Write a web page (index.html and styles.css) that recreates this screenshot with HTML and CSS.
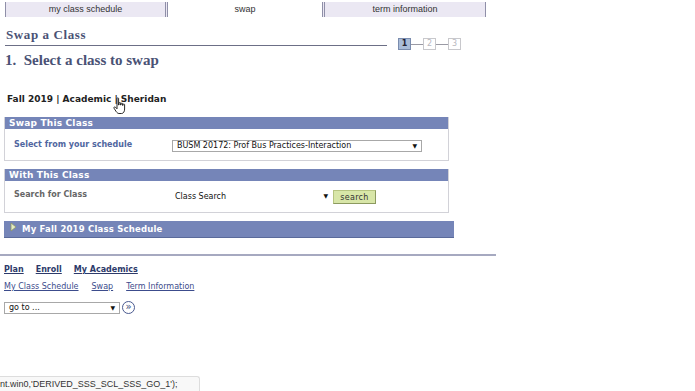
FILE: index.html
```html
<!DOCTYPE html>
<html lang="en">

<head>
    <meta charset="UTF-8">
    <title>Swap a Class</title>
    <link rel="stylesheet" href="styles.css">
</head>

<body>
    <!-- tabs -->
    <div class="tabs">
        <div class="tab tab-1">my class schedule</div>
        <div class="tab tab-on">swap</div>
        <div class="tab tab-3">term information</div>
    </div>

    <div class="title-row">
        <h1 class="title">Swap a Class</h1>
        <div class="steps">
            <span class="step step-on">1</span>
            <span class="step-line"></span>
            <span class="step">2</span>
            <span class="step-line"></span>
            <span class="step">3</span>
        </div>
    </div>

    <h2 class="subtitle">1.&nbsp; Select a class to swap</h2>

    <p class="term">Fall 2019 | Academic | Sheridan</p>

    <div class="panel panel-first">
        <div class="panel-head">Swap This Class</div>
        <div class="panel-body body-mid">
            <span class="label label-blue">Select from your schedule</span>
            <div class="select select-wide">
                <span>BUSM 20172: Prof Bus Practices-Interaction</span>
                <span class="arrow">&#9660;</span>
            </div>
        </div>
    </div>

    <div class="panel">
        <div class="panel-head">With This Class</div>
        <div class="panel-body body-high">
            <span class="label label-gray">Search for Class</span>
            <div class="plain-select">
                <span>Class Search</span>
                <span class="arrow">&#9660;</span>
            </div>
            <button class="search-btn">search</button>
        </div>
    </div>

    <div class="collapse">
        <svg class="tri" width="7" height="10" viewBox="0 0 7 10">
            <path d="M1 1 L6 5 L1 9 Z" fill="#e4ecc4" stroke="#8e9866" stroke-width="0.8" />
        </svg>
        My Fall 2019 Class Schedule
    </div>

    <div class="rule"></div>

    <div class="links-main">
        <a href="#">Plan</a>
        <a href="#">Enroll</a>
        <a href="#">My Academics</a>
    </div>
    <div class="links-sub">
        <a href="#">My Class Schedule</a>
        <a href="#">Swap</a>
        <a href="#">Term Information</a>
    </div>

    <div class="goto">
        <div class="select goto-select">
            <span>go to ...</span>
            <span class="arrow">&#9660;</span>
        </div>
        <span class="go-btn">&raquo;</span>
    </div>

    <!-- cursor over the term line -->
    <svg class="cursor" width="14" height="18" viewBox="0 0 14 18">
        <path d="M4 1.5 C4 0.6 5.6 0.6 5.6 1.5 L5.6 8 L6 8 L6 6.2 C6 5.3 7.6 5.3 7.6 6.2 L7.6 8 L8 8 L8 6.8 C8 5.9 9.6 5.9 9.6 6.8 L9.6 8.4 L10 8.4 L10 7.6 C10 6.8 11.6 6.8 11.6 7.6 L11.6 12 C11.6 14.5 10.5 16.5 8.5 16.5 L6 16.5 C4.8 16.5 4 15.6 3.2 14.6 L1 11.2 C0.5 10.4 1.6 9.4 2.4 10.2 L4 11.8 Z" fill="#fff" stroke="#111" stroke-width="0.9" />
    </svg>

    <div class="status">nt.win0,'DERIVED_SSS_SCL_SSS_GO_1');</div>
</body>

</html>
```

FILE: styles.css
```css
* {
    margin: 0;
    padding: 0;
    box-sizing: border-box;
}

body {
    width: 695px;
    height: 391px;
    background-color: #fff;
    font-family: "DejaVu Sans", Verdana, sans-serif;
    font-size: 9px;
    color: #222;
    position: relative;
    overflow: hidden;
}

/* tabs */
.tabs {
    display: flex;
    margin: 2px 0 0 5px;
    height: 15px;
}

.tab {
    font-family: "Liberation Sans", Arial, sans-serif;
    font-size: 9px;
    line-height: 15px;
    text-align: center;
    color: #333;
    background-color: #ebe8f3;
}

.tab-1 {
    width: 163px;
    border-left: 1px solid #8f8fa8;
    border-right: 3px double #8f8fa8;
}

.tab-on {
    width: 154px;
    background-color: #fff;
}

.tab-3 {
    width: 164px;
    border-left: 3px double #8f8fa8;
    border-right: 1px solid #8f8fa8;
}

/* title */
.title-row {
    display: flex;
    align-items: flex-end;
    margin: 10px 0 0 5px;
}

.title {
    width: 382px;
    font-family: "Liberation Serif", "Times New Roman", serif;
    font-size: 13px;
    font-weight: bold;
    letter-spacing: 0.6px;
    color: #4a5275;
    padding: 0 0 2px 1px;
    border-bottom: 1px solid #6c6f86;
}

.steps {
    display: flex;
    align-items: center;
    margin: 0 0 -4px 11px;
}

.step {
    width: 13px;
    height: 12px;
    border: 1px solid #c8c8cc;
    font-size: 8px;
    line-height: 10px;
    text-align: center;
    color: #b8b8c0;
    background-color: #fff;
}

.step-on {
    background-color: #a9bcd8;
    border-color: #7a8cae;
    color: #223;
    font-weight: bold;
}

.step-line {
    width: 12px;
    border-top: 1px solid #9a9aa4;
}

.subtitle {
    font-family: "Liberation Serif", "Times New Roman", serif;
    font-size: 15px;
    font-weight: bold;
    color: #4a5275;
    margin: 6px 0 0 5px;
}

.term {
    font-size: 9px;
    font-weight: bold;
    color: #222;
    margin: 25px 0 0 7px;
}

/* panels */
.panel {
    width: 445px;
    margin: 8px 0 0 4px;
    border: 1px solid #d2d2d8;
    border-top: none;
}

.panel-first {
    margin-top: 13px;
}

.panel-head {
    background-color: #7585b8;
    color: #fff;
    font-size: 9px;
    font-weight: bold;
    letter-spacing: 0.2px;
    line-height: 12px;
    padding-left: 4px;
}

.panel-body {
    display: flex;
    align-items: center;
    height: 31px;
    padding-left: 9px;
}

.body-mid {
    padding-bottom: 0;
}

.body-high {
    padding-bottom: 5px;
}

.label {
    width: 158px;
    font-weight: bold;
    font-size: 8px;
}

.label-blue {
    color: #5066a0;
}

.label-gray {
    color: #666;
}

.select {
    display: flex;
    justify-content: space-between;
    align-items: center;
    height: 12px;
    border: 1px solid #a8a8a8;
    font-size: 8px;
    padding: 0 4px;
    color: #111;
    background-color: #fff;
}

.select-wide {
    width: 250px;
    margin-top: 2px;
}

.arrow {
    font-size: 6px;
}

.plain-select {
    display: flex;
    justify-content: space-between;
    width: 156px;
    font-size: 8px;
    padding-left: 3px;
    color: #111;
    margin-top: 4px;
}

.search-btn {
    width: 43px;
    height: 14px;
    margin: 6px 0 0 5px;
    font-family: "DejaVu Sans", Verdana, sans-serif;
    font-size: 8px;
    letter-spacing: 0.3px;
    color: #333;
    background-color: #d8e6a8;
    border: 1px solid #b6c480;
    border-right-color: #8c9a60;
    border-bottom-color: #8c9a60;
}

/* collapsed section */
.collapse {
    display: flex;
    align-items: center;
    width: 450px;
    height: 17px;
    margin: 8px 0 0 4px;
    background-color: #7585b8;
    color: #fff;
    font-size: 8.5px;
    font-weight: bold;
    letter-spacing: 0.2px;
    border-bottom: 1px solid #5a6a9a;
}

.tri {
    margin: -5px 5px 0 6px;
}

.rule {
    width: 496px;
    margin-top: 16px;
    border-top: 2px solid #a6a9c0;
}

/* links */
.links-main {
    display: flex;
    gap: 12px;
    margin: 9px 0 0 4px;
}

.links-main a {
    font-weight: bold;
    font-size: 8px;
    color: #2d3a6a;
}

.links-sub {
    display: flex;
    gap: 13px;
    margin: 8px 0 0 4px;
}

.links-sub a {
    font-size: 8px;
    color: #3c4c8c;
}

.goto {
    display: flex;
    align-items: center;
    margin: 10px 0 0 4px;
}

.goto-select {
    width: 116px;
}

.go-btn {
    width: 13px;
    height: 13px;
    margin-left: 2px;
    border: 1px solid #4a5a90;
    border-radius: 50%;
    font-size: 10px;
    line-height: 10px;
    text-align: center;
    color: #3a4a80;
}

.cursor {
    position: absolute;
    left: 113px;
    top: 97px;
}

.status {
    position: absolute;
    left: 0;
    bottom: 0;
    width: 200px;
    height: 15px;
    font-family: "Liberation Sans", Arial, sans-serif;
    font-size: 9px;
    line-height: 14px;
    color: #333;
    background-color: #f8f8f8;
    border: 1px solid #ddd;
    border-left: none;
    border-bottom: none;
    border-top-right-radius: 3px;
}
```
